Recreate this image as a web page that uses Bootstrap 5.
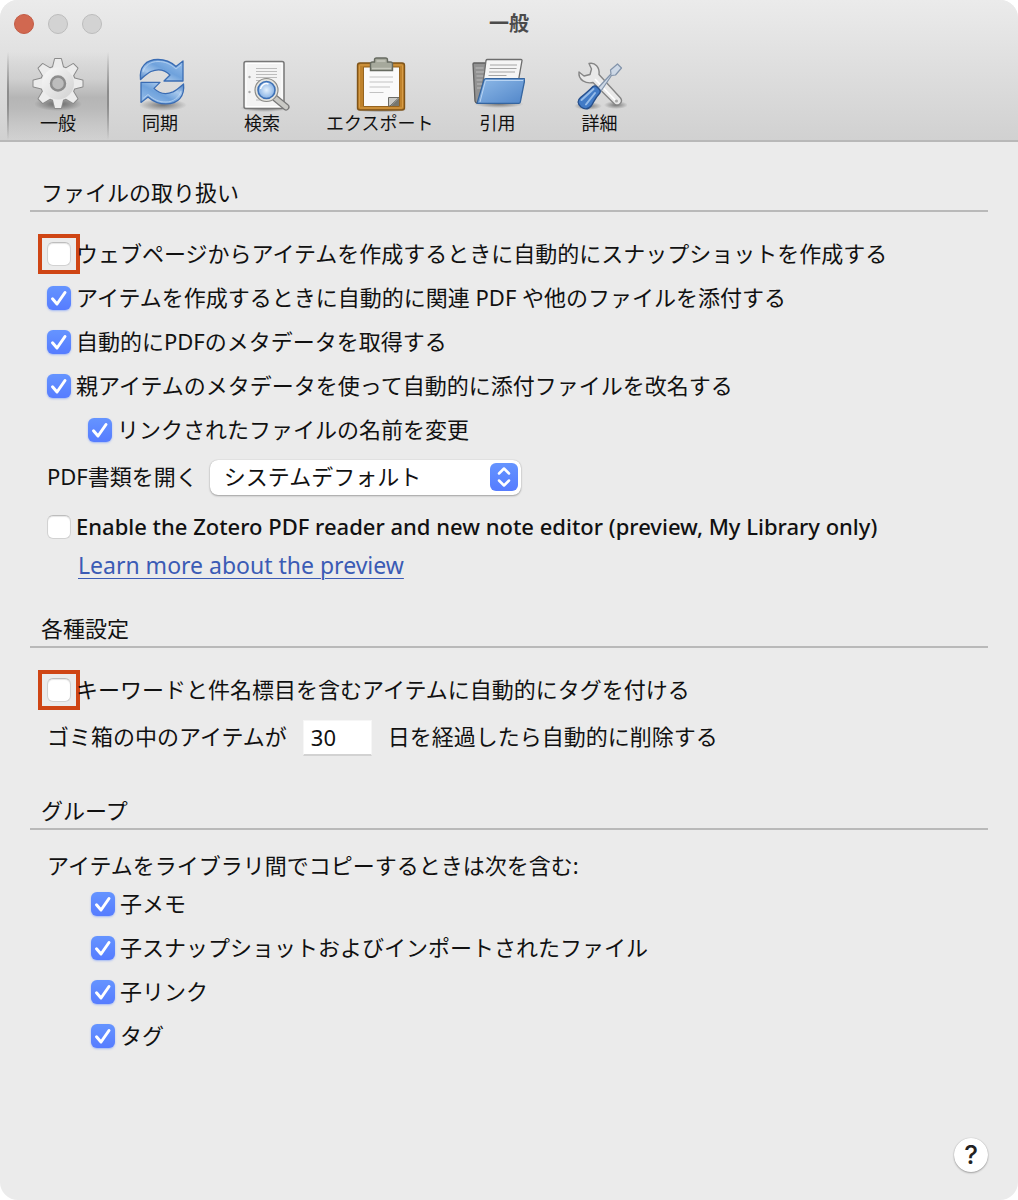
<!DOCTYPE html>
<html lang="ja">
<head>
<meta charset="utf-8">
<meta name="viewport" content="width=device-width, initial-scale=1">
<title>一般</title>
<link href="https://cdn.jsdelivr.net/npm/bootstrap@5.3.0/dist/css/bootstrap.min.css" rel="stylesheet">
<style>
  body { background: #fff; color: #111; font-family: "Noto Sans", "Noto Sans CJK JP", sans-serif; font-size: 22px; line-height: 32px; }
  .pref-window { background: #ebebeb; border-radius: 18px; overflow: hidden; }
  .pref-header { background: linear-gradient(#ebebeb, #e2e2e2 35%, #d1d1d1); border-bottom: 2px solid #b8b8b8; }
  .title-bar { display: grid; grid-template-columns: 1fr auto 1fr; height: 47px; }
  .title-text { font-size: 20px; font-weight: 700; color: #4b4b4b; line-height: 44px; }
  .light { width: 20px; height: 20px; border-radius: 50%; background: #d3d3d3; border: 1px solid #bcbcbc; padding: 0; }
  .light-close { background: #d16850; border-color: #c25b45; }
  .lights { gap: 14px; padding-left: 14px; }
  .toolbar { padding: 5px 7px 0; }
  .tool { min-width: 102px; height: 88px; padding: 4px 13px 0; border: 0; background: none; color: #111; font-size: 18px; line-height: 23px; position: relative; }
  .tool svg { width: 56px; height: 56px; display: block; }
  .tool.active { background: linear-gradient(#e2e2e200, #d0d0d0 30%, #b5b5b5 52%, #bababa 65%, #d2d2d200); }
  .tool.active::before, .tool.active::after { content: ""; position: absolute; top: 0; bottom: 0; width: 2px; background: linear-gradient(#99999900, #8c8c8c 45%, #8c8c8c 60%, #99999900); }
  .tool.active::before { left: 0; }
  .tool.active::after { right: 0; }
  .pref-body { padding: 34px 30px 28px; }
  .group-title { font-size: 22px; font-weight: 400; line-height: 32px; padding: 0 0 2px 11px; border-bottom: 2px solid #b9b9b9; margin: 0 0 20px; }
  .group-rows { padding-left: 17px; }
  .group-rows label, .row-text { padding-bottom: 2px; }
  .pref-section + .pref-section { margin-top: 30px; }
  .pref-row { min-height: 44px; gap: 5px; }
  .sub-row { margin-left: 41px; }
  .sub-list { margin-left: 44px; }
  .wide-row { min-height: 50px; gap: 12px; }
  .trash-row { min-height: 52px; gap: 16px; }
  .trash-row label, .trash-row .row-text { padding-bottom: 4px; }
  .preview-row { margin-top: 3px; }
  .preview-row label { font-weight: 500; }
  .copy-intro { line-height: 30px; padding-bottom: 2px; }
  .tick.form-check-input { width: 24px; height: 24px; margin: 0; border: 1px solid #d2d2d2; border-top-color: #bdbdbd; border-radius: 6px; background-color: #fff; flex: none; box-shadow: inset 0 1px 1px #0000001a; }
  .tick.form-check-input:checked { border: 0; box-shadow: 0 1px 2px #5b87ff80; background-color: #5b87ff;
    background-image: url("data:image/svg+xml,%3Csvg xmlns='http://www.w3.org/2000/svg' viewBox='0 0 24 24'%3E%3Cpath d='M5.5 12.8 10 18 18 6.5' fill='none' stroke='%23fff' stroke-width='3' stroke-linecap='round' stroke-linejoin='round'/%3E%3C/svg%3E"), linear-gradient(#6594ff, #567cff); background-size: 100% 100%; }
  .flagged { border: 4px solid #cf4514; padding: 4px 5px; margin: -8px -9px; flex: none; }
  .reader-select.form-select { width: 311px; height: 35px; padding: 0 40px 2px 14px; border: 0; border-radius: 8px; font-size: 22px; line-height: 32px; color: #111; box-shadow: 0 1px 2px #0000004d, 0 0 1px #00000040;
    background: #fff url("data:image/svg+xml,%3Csvg xmlns='http://www.w3.org/2000/svg' viewBox='0 0 28 28'%3E%3ClinearGradient id='g' x2='0' y2='1'%3E%3Cstop stop-color='%236594ff'/%3E%3Cstop offset='1' stop-color='%23567cff'/%3E%3C/linearGradient%3E%3Crect width='28' height='28' rx='6' fill='url(%23g)'/%3E%3Cpath d='m9 10.5 5-5 5 5M9 17.5l5 5 5-5' fill='none' stroke='%23fff' stroke-width='2.5' stroke-linecap='round' stroke-linejoin='round'/%3E%3C/svg%3E") no-repeat right 3px center / 28px 28px; }
  .days-input.form-control { width: 69px; height: 36px; padding: 0 7px 2px; border: 1px solid #f6f6f6; border-bottom: 2px solid #d2d2d2; border-radius: 0; font-size: 22px; line-height: 32px; color: #111; }
  .preview-link { margin-left: 31px; line-height: 33px; font-size: 23px; color: #3b5bb5; text-decoration-thickness: 1px; text-underline-offset: 4px; }
  .preview-link-row { height: 33px; }
  .help-btn { width: 34px; height: 34px; border: 0; border-radius: 50%; background: #fff; padding: 0; font: 500 26px/34px Inter, "Noto Sans", sans-serif; color: #222; box-shadow: 0 1px 2px #0000004d, 0 0 1px #00000040; }
</style>
</head>
<body>
<div class="pref-window d-flex flex-column min-vh-100">
  <header class="pref-header">
    <div class="title-bar align-items-center">
      <div class="lights d-flex">
        <button class="light light-close" type="button" aria-label="閉じる"></button>
        <button class="light" type="button" aria-label="しまう"></button>
        <button class="light" type="button" aria-label="拡大"></button>
      </div>
      <div class="title-text">一般</div>
    </div>
    <nav class="toolbar d-flex">
      <button class="tool active d-flex flex-column align-items-center" type="button">
        <svg viewBox="0 0 56 56" aria-hidden="true">
          <defs>
            <linearGradient id="gearFill" x1="0" y1="0" x2="1" y2="1"><stop stop-color="#fafafa"/><stop offset="1" stop-color="#d0d0d0"/></linearGradient>
            <radialGradient id="shade"><stop stop-color="#000" stop-opacity=".45"/><stop offset="1" stop-color="#000" stop-opacity="0"/></radialGradient>
            <g id="gearShape">
              <circle cx="28" cy="27.500" r="17"/>
              <g id="teeth"><path d="M22.500 13l2.500-10h6l2.500 10zM22.500 42l2.500 10h6l2.500-10z"/><path d="M13.500 22l-10 2.500v6l10 2.500zM42.500 22l10 2.500v6l-10 2.500z"/></g>
              <use href="#teeth" transform="rotate(45 28 27.500)"/>
            </g>
          </defs>
          <ellipse cx="28" cy="48" rx="24" ry="7" fill="url(#shade)"/>
          <use href="#gearShape" fill="#8b8b8b" stroke="#8b8b8b" stroke-width="2" stroke-linejoin="round"/>
          <use href="#gearShape" fill="#ececec" stroke="none"/>
          <circle cx="28" cy="27.500" r="16" fill="url(#gearFill)"/>
          <circle cx="28" cy="27.500" r="7" fill="#bdbdbd" stroke="#8d8d8d" stroke-width="2.500"/>
        </svg>一般</button>
      <button class="tool d-flex flex-column align-items-center" type="button">
        <svg viewBox="0 0 56 56" aria-hidden="true">
          <defs>
            <linearGradient id="blueArrow" x1="0" y1="1" x2="1" y2="0"><stop stop-color="#3a72bb"/><stop offset=".3" stop-color="#a9c9ec"/><stop offset=".55" stop-color="#6fa2dc"/><stop offset="1" stop-color="#9dc2ec"/></linearGradient>
            <path id="syncArrow" d="M8.500 23.500C7 11 14 3.500 26 3.500c8 0 13 2.500 18 7L51 5v20H32l6-6c-5-5-12-6.500-19-3.500-4 2-6.500 4.500-10.500 8z"/>
          </defs>
          <ellipse cx="31" cy="49" rx="24" ry="6" fill="url(#shade)"/>
          <g fill="url(#blueArrow)" stroke="#3a6cb3" stroke-width="1.300" stroke-linejoin="round">
            <use href="#syncArrow"/><use href="#syncArrow" transform="rotate(180 30 25.700)"/>
          </g>
          <path d="M11 16C13 9 19 5.500 26 5.500c7 0 12 2 18 7.500l5-4M49 35c-2 7-8 11-15 11-7 0-12-2-18-7.500l-5 4" fill="none" stroke="#c4dbf5" stroke-opacity=".7"/>
        </svg>同期</button>
      <button class="tool d-flex flex-column align-items-center" type="button">
        <svg viewBox="0 0 56 56" aria-hidden="true">
          <defs><radialGradient id="glass"><stop stop-color="#e4f1fd"/><stop offset="1" stop-color="#86b1e4"/></radialGradient></defs>
          <ellipse cx="31" cy="52" rx="25" ry="4" fill="url(#shade)"/>
          <rect x="10" y="5.500" width="40" height="47" rx="2" fill="#f3f3f3" stroke="#777" stroke-width="1.500"/>
          <path d="M12 7.500h36v43H12z" fill="none" stroke="#fff"/>
          <path d="M22 12.500h21M22 15.500h21M22 18.500h21M22 21.500h21M22 24.500h8M22 44h6" stroke="#bcbcbc"/>
          <circle cx="15.500" cy="21" r="1.200" fill="#aaa"/><circle cx="15.500" cy="36" r="1.200" fill="#aaa"/>
          <path d="m41 42 11 9" stroke="#777" stroke-width="7" stroke-linecap="round"/>
          <path d="m41 42 11 9" stroke="#c9c9c5" stroke-width="4.500" stroke-linecap="round"/>
          <circle cx="32.500" cy="34" r="11.500" fill="#e4e4df" stroke="#8b8b88" stroke-width="1.200"/>
          <circle cx="32.500" cy="34" r="8.500" fill="url(#glass)" stroke="#3d70b5" stroke-width="1.600"/>
          <path d="M26.500 33a6 6 0 0 1 8-5" fill="none" stroke="#fff" stroke-width="1.500"/>
        </svg>検索</button>
      <button class="tool d-flex flex-column align-items-center" type="button">
        <svg viewBox="0 0 56 56" aria-hidden="true">
          <ellipse cx="29" cy="53" rx="27" ry="4" fill="url(#shade)"/>
          <rect x="5.500" y="7" width="47" height="47" rx="2.500" fill="#bf822c" stroke="#7f541a" stroke-width="1.400"/>
          <rect x="7.500" y="9" width="43" height="43" rx="1" fill="none" stroke="#d79c47"/>
          <path d="M11.500 11h36v39.500h-36z" fill="#fafafa" stroke="#96641f"/>
          <path d="M47 41.500 38 50h-1.500v-8.500z" fill="#c9c9c5" stroke="#6b6b66"/>
          <path d="M47 42v8h-8.500z" fill="#77776f"/>
          <path d="M17.500 21H41M17.500 26H41M17.500 31H38M17.500 36.500h14" stroke="#c2c2c2" stroke-width="1.200"/>
          <path d="M18.500 14.500V8q0-2 2-2h2V4q0-2 2-2h9q2 0 2 2v2h3q2 0 2 2v6.500z" fill="#a6a99c" stroke="#666a60" stroke-width="1.400"/>
          <path d="M20 12.500h19M24.500 5h9" stroke="#c6c8bd" stroke-width="1.500"/>
        </svg>エクスポート</button>
      <button class="tool d-flex flex-column align-items-center" type="button">
        <svg viewBox="0 0 56 56" aria-hidden="true">
          <defs><linearGradient id="folderFront" x1="0" y1="0" x2="1" y2="1"><stop stop-color="#8fbae8"/><stop offset="1" stop-color="#5186c9"/></linearGradient></defs>
          <ellipse cx="30" cy="48" rx="25" ry="4" fill="url(#shade)"/>
          <path d="M4 8q0-1 1-1h12l3 3v30L8 47q-1.500 0-2-2z" fill="#929292" stroke="#5f5f5f" stroke-width="1.300"/>
          <path d="M6.500 12h8M7 16h8M7.500 20h7M7.500 24h6M8 28h5M8 32h4" stroke="#bcbcbc"/>
          <path d="M17 4.500q.3-1 1.500-1H52q1.200 0 1 1.200L49 27l-30 5-9 12c4-13 5.500-26 7-39.500z" fill="#f5f5f5" stroke="#6d6d6d" stroke-width="1.300"/>
          <path d="M21 9h27M20.500 12.500h27M20 16h26M19.500 19.500h18" stroke="#a5a5a5" stroke-width="1.200"/>
          <path d="M15 24q.4-1.300 1.800-1.300H55q1 0 .8 1l-4.500 22.500q-.3 1.200-1.600 1.200H8z" fill="url(#folderFront)" stroke="#35659f" stroke-width="1.300" stroke-linejoin="round"/>
          <path d="M11 46 16.500 24.500H54" fill="none" stroke="#b8d4f3"/>
        </svg>引用</button>
      <button class="tool d-flex flex-column align-items-center" type="button">
        <svg viewBox="0 0 56 56" aria-hidden="true">
          <ellipse cx="17" cy="50" rx="14" ry="4" fill="url(#shade)"/><ellipse cx="45" cy="49" rx="12" ry="4" fill="url(#shade)"/>
          <path d="M18 7.500c6-1.500 11 4 10 11l21.500 23.500c3 4-2 9-6 6L22 26.500C15 28 7 24 8 16l5 4 6-1.500 1.500-5.500z" fill="#e9e9e9" stroke="#858585" stroke-width="1.400" stroke-linejoin="round"/>
          <path d="m24 23 20 21" stroke="#fff" stroke-width="1.500"/><circle cx="45.500" cy="45" r="1.500" fill="#aaa"/>
          <path d="m27 32 13-14-.5-4 7-6 4 4-6 7-4 .5L30 35z" fill="#cdd8e6" stroke="#8293aa" stroke-width="1.200" stroke-linejoin="round"/>
          <path d="M22 30.500q2-1.500 4 .5l2.500 2.500q1.500 2 0 4c-4 4-5 7-8 12-3 4-7 4-10.500 1.500C6.500 48 6 44.500 9.500 41.500c4.500-4 8.500-6.500 12.500-11z" fill="#427bc6" stroke="#264f8b" stroke-width="1.300" stroke-linejoin="round"/>
          <path d="m10.500 44 12-11M15 48.500l9-11.500" stroke="#96bce8" stroke-width="2" stroke-linecap="round"/>
        </svg>詳細</button>
    </nav>
  </header>

  <main class="pref-body d-flex flex-column flex-grow-1">
    <section class="pref-section">
      <h2 class="group-title">ファイルの取り扱い</h2>
      <div class="group-rows">
        <div class="pref-row d-flex align-items-center"><span class="flagged d-flex"><input class="tick form-check-input" type="checkbox" id="snap"></span><label for="snap">ウェブページからアイテムを作成するときに自動的にスナップショットを作成する</label></div>
        <div class="pref-row d-flex align-items-center"><input class="tick form-check-input" type="checkbox" id="attach" checked><label for="attach">アイテムを作成するときに自動的に関連 PDF や他のファイルを添付する</label></div>
        <div class="pref-row d-flex align-items-center"><input class="tick form-check-input" type="checkbox" id="meta" checked><label for="meta">自動的にPDFのメタデータを取得する</label></div>
        <div class="pref-row d-flex align-items-center"><input class="tick form-check-input" type="checkbox" id="rename" checked><label for="rename">親アイテムのメタデータを使って自動的に添付ファイルを改名する</label></div>
        <div class="pref-row sub-row d-flex align-items-center"><input class="tick form-check-input" type="checkbox" id="linked" checked><label for="linked">リンクされたファイルの名前を変更</label></div>
        <div class="wide-row d-flex align-items-center"><label for="reader">PDF書類を開く</label><select class="reader-select form-select" id="reader"><option>システムデフォルト</option></select></div>
        <div class="pref-row preview-row d-flex align-items-center"><input class="tick form-check-input" type="checkbox" id="preview"><label for="preview">Enable the Zotero PDF reader and new note editor (preview, My Library only)</label></div>
        <div class="preview-link-row"><a class="preview-link" href="#">Learn more about the preview</a></div>
      </div>
    </section>

    <section class="pref-section">
      <h2 class="group-title">各種設定</h2>
      <div class="group-rows">
        <div class="pref-row d-flex align-items-center"><span class="flagged d-flex"><input class="tick form-check-input" type="checkbox" id="tags"></span><label for="tags">キーワードと件名標目を含むアイテムに自動的にタグを付ける</label></div>
        <div class="trash-row d-flex align-items-center"><label for="days">ゴミ箱の中のアイテムが</label><input class="days-input form-control" type="text" id="days" value="30"><span class="row-text">日を経過したら自動的に削除する</span></div>
      </div>
    </section>

    <section class="pref-section">
      <h2 class="group-title">グループ</h2>
      <div class="group-rows">
        <p class="copy-intro m-0">アイテムをライブラリ間でコピーするときは次を含む:</p>
        <div class="sub-list">
          <div class="pref-row d-flex align-items-center"><input class="tick form-check-input" type="checkbox" id="notes" checked><label for="notes">子メモ</label></div>
          <div class="pref-row d-flex align-items-center"><input class="tick form-check-input" type="checkbox" id="files" checked><label for="files">子スナップショットおよびインポートされたファイル</label></div>
          <div class="pref-row d-flex align-items-center"><input class="tick form-check-input" type="checkbox" id="links" checked><label for="links">子リンク</label></div>
          <div class="pref-row d-flex align-items-center"><input class="tick form-check-input" type="checkbox" id="tag" checked><label for="tag">タグ</label></div>
        </div>
      </div>
    </section>

    <div class="d-flex justify-content-end mt-auto"><button class="help-btn" type="button">?</button></div>
  </main>
</div>
<script src="https://cdn.jsdelivr.net/npm/bootstrap@5.3.0/dist/js/bootstrap.bundle.min.js"></script>
</body>
</html>
